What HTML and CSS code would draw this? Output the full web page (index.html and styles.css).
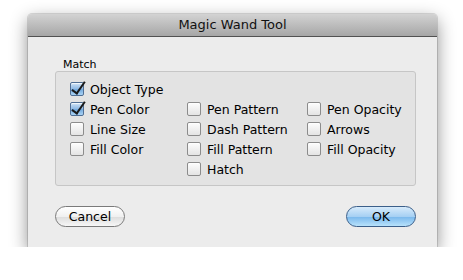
FILE: index.html
```html
<!DOCTYPE html>
<html lang="en">
<head>
    <meta charset="UTF-8">
    <title>Magic Wand Tool</title>
    <link rel="stylesheet" href="styles.css">
</head>
<body>
<div class="window">
    <div class="titlebar">Magic Wand Tool</div>
    <div class="content">
        <div class="group-label">Match</div>
        <div class="group">
            <div class="grid">
                <label class="check"><span class="box checked"></span>Object Type</label>
                <span></span>
                <span></span>

                <label class="check"><span class="box checked"></span>Pen Color</label>
                <label class="check"><span class="box"></span>Pen Pattern</label>
                <label class="check"><span class="box"></span>Pen Opacity</label>

                <label class="check"><span class="box"></span>Line Size</label>
                <label class="check"><span class="box"></span>Dash Pattern</label>
                <label class="check"><span class="box"></span>Arrows</label>

                <label class="check"><span class="box"></span>Fill Color</label>
                <label class="check"><span class="box"></span>Fill Pattern</label>
                <label class="check"><span class="box"></span>Fill Opacity</label>

                <span></span>
                <label class="check"><span class="box"></span>Hatch</label>
                <span></span>
            </div>
        </div>
        <div class="buttons">
            <button class="btn">Cancel</button>
            <button class="btn btn-default">OK</button>
        </div>
    </div>
</div>
</body>
</html>
```

FILE: styles.css
```css
body {
    margin: 0;
    padding: 14px 0 0 28px;
    background: #fff;
    font-family: "DejaVu Sans", "Liberation Sans", sans-serif;
    font-size: 12px;
    color: #000;
}

.window {
    width: 409px;
    height: 233px;
    background: #ececec;
    border-radius: 4px 4px 0 0;
    box-shadow: 0 6px 18px rgba(0, 0, 0, 0.45), 0 0 0 1px rgba(0, 0, 0, 0.12);
    display: flex;
    flex-direction: column;
}

.titlebar {
    height: 22px;
    line-height: 22px;
    text-align: center;
    font-size: 13px;
    background: linear-gradient(#d3d3d3, #a6a6a6);
    border-bottom: 1px solid #515151;
    border-radius: 4px 4px 0 0;
    color: #111;
}

.content {
    padding: 0 21px 0 27px;
    flex: 1;
    display: flex;
    flex-direction: column;
}

.group-label {
    font-size: 11px;
    padding: 19px 0 0 8px;
    height: 15px;
    line-height: 17px;
}

.group {
    height: 115px;
    background: #e3e3e3;
    border: 1px solid #c6c6c6;
    border-radius: 3px;
    box-sizing: border-box;
    padding: 7px 0 0 14px;
}

.grid {
    display: grid;
    grid-template-columns: 117px 120px 100px;
    grid-auto-rows: 20px;
}

.check {
    display: flex;
    align-items: center;
    gap: 6px;
    font-size: 12.5px;
    white-space: nowrap;
}

.box {
    width: 12px;
    height: 12px;
    border: 1px solid #8c8c8c;
    border-radius: 2px;
    background: linear-gradient(#fdfdfd, #e4e4e4);
    box-shadow: inset 0 1px 1px rgba(255, 255, 255, 0.8);
    position: relative;
    flex: none;
}

.box.checked {
    border-color: #4f6e94;
    background: linear-gradient(#cfe3f6, #8db8e4 50%, #6fa6dc 51%, #a8d2f4);
}

.box.checked::after {
    content: "";
    position: absolute;
    left: 4px;
    top: -4px;
    width: 5px;
    height: 13px;
    border-right: 2.5px solid #1a1a1a;
    border-bottom: 2.5px solid #1a1a1a;
    transform: rotate(35deg);
    transform-origin: center;
}

.buttons {
    display: flex;
    justify-content: space-between;
    padding: 20px 0 0 0;
}

.btn {
    width: 70px;
    height: 21px;
    border-radius: 11px;
    border: 1px solid #7a7a7a;
    background: linear-gradient(#ffffff, #f0f0f0 50%, #dcdcdc 51%, #f7f7f7);
    font-family: "DejaVu Sans", "Liberation Sans", sans-serif;
    font-size: 12.5px;
    color: #000;
    padding: 0;
    line-height: 19px;
}

.btn-default {
    border-color: #3b5f8a;
    background: linear-gradient(#d7ebfb, #a6d0f3 50%, #78b7ec 51%, #b8e2fb);
}
```
